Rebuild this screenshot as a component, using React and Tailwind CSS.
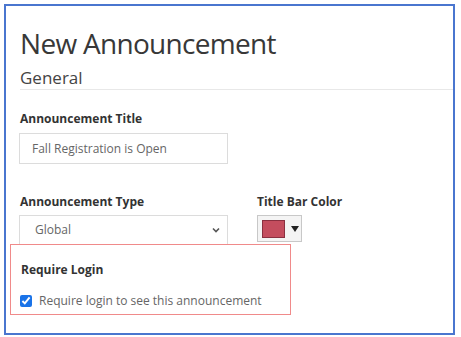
import React from 'react';

const font = { fontFamily: '"Open Sans", "Noto Sans", sans-serif' };

export default function App() {
  return (
    <div className="w-[461px] h-[337px] bg-white p-[4px]" style={font}>
      <div className="w-[451px] h-[331px] border-2 border-[#4a76cf] pl-[13px] text-[#333]">
        <h1 className="text-[28px] leading-[36px] tracking-[-0.7px] text-[#383838] mt-[19px] ml-[1px]">New Announcement</h1>
        <div className="text-[17px] leading-[22px] text-[#444] mt-[6px] ml-[1px] pb-[0px] border-b border-[#e8e8e8]">
          General
        </div>

        <label className="block font-bold text-[12px] leading-[16px] mt-[21px] ml-[1px]">Announcement Title</label>
        <div className="w-[209px] h-[31px] border border-[#dcdcdc] mt-[6px] flex items-center pl-[12px] text-[12px] text-[#666]">
          Fall Registration is Open
        </div>

        <div className="flex mt-[30px]">
          <div className="w-[238px]">
            <label className="block font-bold text-[12px] leading-[16px] ml-[1px]">Announcement Type</label>
            <div className="w-[209px] h-[29px] border border-[#dcdcdc] border-b-0 mt-[5px] flex items-center justify-between pl-[15px] pr-[6px] text-[12px] text-[#666]">
              <span>Global</span>
              <svg width="10" height="10" viewBox="0 0 10 10" fill="none" stroke="#555" strokeWidth="1.6">
                <path d="M2 3.5 L5 6.5 L8 3.5" />
              </svg>
            </div>
          </div>
          <div>
            <label className="block font-bold text-[12px] leading-[16px]">Title Bar Color</label>
            <div className="w-[45px] h-[27px] border border-[#c8c8c8] bg-[#f4f4f4] mt-[5px] flex items-center pl-[4px]">
              <div className="w-[23px] h-[18px] bg-[#c44d5e] border border-[#8a3040]" />
              <svg width="8" height="6" viewBox="0 0 8 6" className="ml-[6px]">
                <path d="M0 0 H8 L4 6 Z" fill="#222" />
              </svg>
            </div>
          </div>
        </div>

        <div className="w-[281px] h-[71px] border-[1.5px] border-[#f08a8a] -ml-[9px] pl-[9px]">
          <div className="font-bold text-[12px] leading-[16px] mt-[17px] ml-[1px]">Require Login</div>
          <label className="flex items-center mt-[14px] text-[12px] text-[#666]">
            <input type="checkbox" defaultChecked className="w-[12px] h-[12px] m-0 accent-[#1a73e8]" />
            <span className="ml-[7px]">Require login to see this announcement</span>
          </label>
        </div>
      </div>
    </div>
  );
}
